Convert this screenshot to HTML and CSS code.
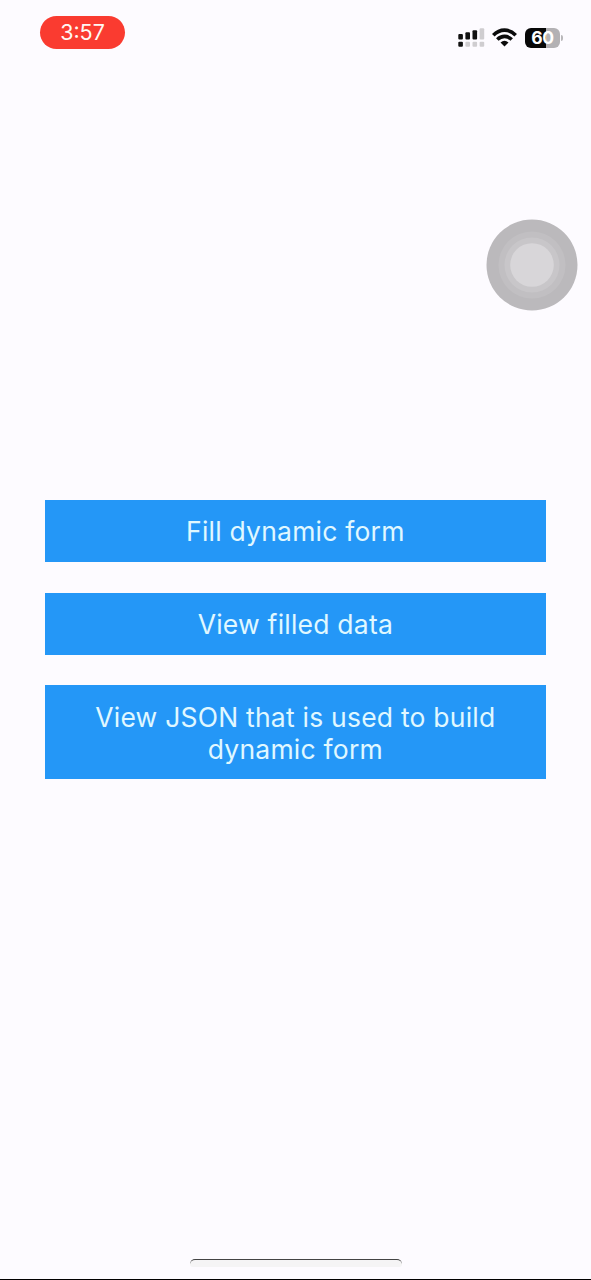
FILE: index.html
```html
<!DOCTYPE html>
<html lang="en">
<head>
<meta charset="utf-8">
<title>Dynamic form</title>
<link rel="stylesheet" href="styles.css">
</head>
<body>
<div class="screen">
  <header class="status-bar">
    <time class="clock">3:57</time>
    <div class="indicators">
      <svg class="signal" width="28" height="20" viewBox="0 0 28 20" aria-hidden="true">
        <g fill="#111"><rect x="0.3" y="6" width="4.6" height="5.6" rx="1"/><rect x="7.4" y="4.2" width="4.6" height="7.4" rx="1"/><rect x="14.5" y="2.3" width="4.6" height="9.3" rx="1"/><rect x="0.3" y="13.7" width="4.6" height="5" rx="1"/></g>
        <g fill="#cfcdd0"><rect x="21.6" y="0.3" width="4.6" height="11.3" rx="1"/><rect x="7.4" y="13.7" width="4.6" height="5" rx="1"/><rect x="14.5" y="13.7" width="4.6" height="5" rx="1"/><rect x="21.6" y="13.7" width="4.6" height="5" rx="1"/></g>
      </svg>
      <svg class="wifi" width="25" height="19" viewBox="0 0 25 19" aria-hidden="true">
        <g fill="none" stroke="#0b0b0b" stroke-width="3.6"><path d="M1.3 7.2Q6.3 2.1 12.5 2.1T23.7 7.2"/><path d="M5.3 11.5Q8.5 8.4 12.5 8.4T19.7 11.5"/></g>
        <path fill="#0b0b0b" d="M8.5 14.5Q12.5 11.2 16.5 14.5L12.5 18.4Z"/>
      </svg>
      <div class="battery"><span class="battery-level">60</span></div>
    </div>
  </header>
  <main class="actions">
    <button class="action">Fill dynamic form</button>
    <button class="action">View filled data</button>
    <button class="action">View JSON that is used to build dynamic form</button>
  </main>
  <svg class="assistive-touch" viewBox="0 0 92 92" aria-hidden="true">
    <circle cx="46" cy="46" r="45.5" fill="#bbb9bc"/>
    <circle cx="46" cy="46" r="33.5" fill="#c1bfc2"/>
    <circle cx="46" cy="46" r="27.5" fill="#c8c6c9"/>
    <circle cx="46" cy="46" r="21.8" fill="#d8d6d9"/>
  </svg>
  <footer class="home-area"><div class="home-indicator"></div></footer>
</div>
</body>
</html>
```
FILE: styles.css
```css
* { box-sizing: border-box; }
body { margin: 0; background: #fdfbff; font-family: Inter, "Liberation Sans", sans-serif; }
.screen { position: relative; display: flex; flex-direction: column; width: 591px; height: 1280px; overflow: hidden; border-bottom: 1px solid #000; }
.status-bar { display: flex; justify-content: space-between; align-items: flex-start; height: 120px; padding: 16px 28px 0 40px; }
.clock { width: 85px; height: 33px; border-radius: 17px; background: #fa3b30; color: #fff8f3; font-size: 21.5px; line-height: 33px; text-align: center; }
.indicators { display: flex; align-items: center; padding-top: 11px; }
.signal { margin: 1px 6px 0 0; }
.wifi { margin-right: 8px; }
.battery { position: relative; width: 35px; height: 20px; margin-right: 3px; border-radius: 6px; background: linear-gradient(90deg, #080808 60%, #b3b1b4 60%); color: #fff; font-size: 17.5px; font-weight: 700; line-height: 20px; text-align: center; }
.battery::after { content: ""; position: absolute; right: -3px; top: 7px; width: 2px; height: 6px; border-radius: 0 2px 2px 0; background: #b9b7ba; }
.battery-level { letter-spacing: -0.3px; }
.actions { flex: 1; display: flex; flex-direction: column; gap: 30.6px; padding: 380px 45.5px 0 45.2px; }
.action { width: 100%; padding: 15.4px 30px 14.6px; border: 0; border-radius: 0; background: #2497f7; color: #e0f8ff; font: 400 26.5px/32px Inter, "Liberation Sans", sans-serif; letter-spacing: 0.22px; text-align: center; }
.assistive-touch { position: absolute; left: 486px; top: 219px; width: 92px; height: 92px; }
.home-area { display: flex; justify-content: center; height: 20px; }
.home-indicator { width: 212px; height: 8px; border-top: 1.5px solid #444; border-radius: 5px 5px 3px 3px; background: #f5f4f5; }
```
